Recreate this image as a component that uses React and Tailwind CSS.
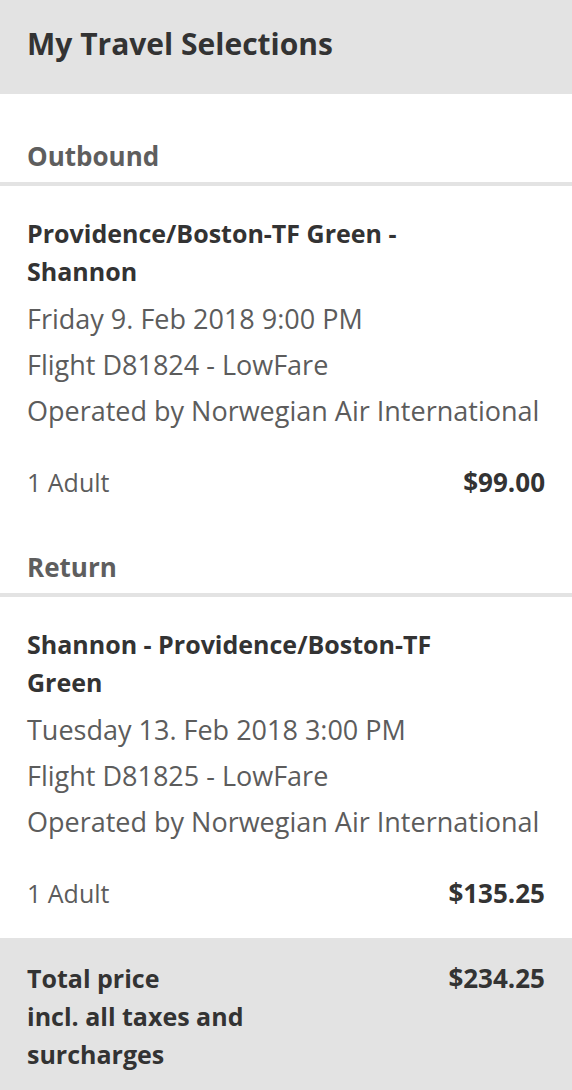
const font = { fontFamily: '"Open Sans", Arial, sans-serif' };

const Leg = ({ title, top, route, date, flight, operator, price }) => (
  <div>
    <div className={`px-[27px] ${top} pb-[6px]`}>
      <h3 className="text-[26px] leading-[40px] font-bold text-[#5e5e5e]">{title}</h3>
    </div>
    <div className="h-[4px] bg-[#e3e3e3]" />
    <div className="px-[27px] pt-[28px] pb-[22px]">
      <p className="w-[440px] text-[25px] leading-[38px] font-bold text-[#333]">{route}</p>
      <div className="mt-[6px] text-[27px] leading-[46px] text-[#5c5c5c]">
        <p>{date}</p>
        <p>{flight}</p>
        <p>{operator}</p>
      </div>
      <div className="mt-[25px] flex justify-between items-baseline leading-[46px]">
        <span className="text-[25px] text-[#5c5c5c]">1 Adult</span>
        <span className="text-[26px] font-bold text-[#333]">{price}</span>
      </div>
    </div>
  </div>
);

export default function App() {
  return (
    <div className="w-[572px] min-h-[1090px] bg-white flex flex-col" style={font}>
      <div className="h-[94px] bg-[#e3e3e3] px-[27px] pt-[24px]">
        <h2 className="text-[30px] leading-[40px] font-bold text-[#333]">My Travel Selections</h2>
      </div>
      <Leg
        title="Outbound"
        top="pt-[42px]"
        route="Providence/Boston-TF Green - Shannon"
        date="Friday 9. Feb 2018 9:00 PM"
        flight="Flight D81824 - LowFare"
        operator="Operated by Norwegian Air International"
        price="$99.00"
      />
      <Leg
        title="Return"
        top="pt-[20px]"
        route="Shannon - Providence/Boston-TF Green"
        date="Tuesday 13. Feb 2018 3:00 PM"
        flight="Flight D81825 - LowFare"
        operator="Operated by Norwegian Air International"
        price="$135.25"
      />
      <div className="flex-1 bg-[#e3e3e3] px-[27px] pt-[21px] pb-[14px] flex justify-between text-[25px] leading-[38px] font-bold text-[#333]">
        <p>
          Total price
          <br />
          incl. all taxes and
          <br />
          surcharges
        </p>
        <span className="text-[26px]">$234.25</span>
      </div>
    </div>
  );
}
